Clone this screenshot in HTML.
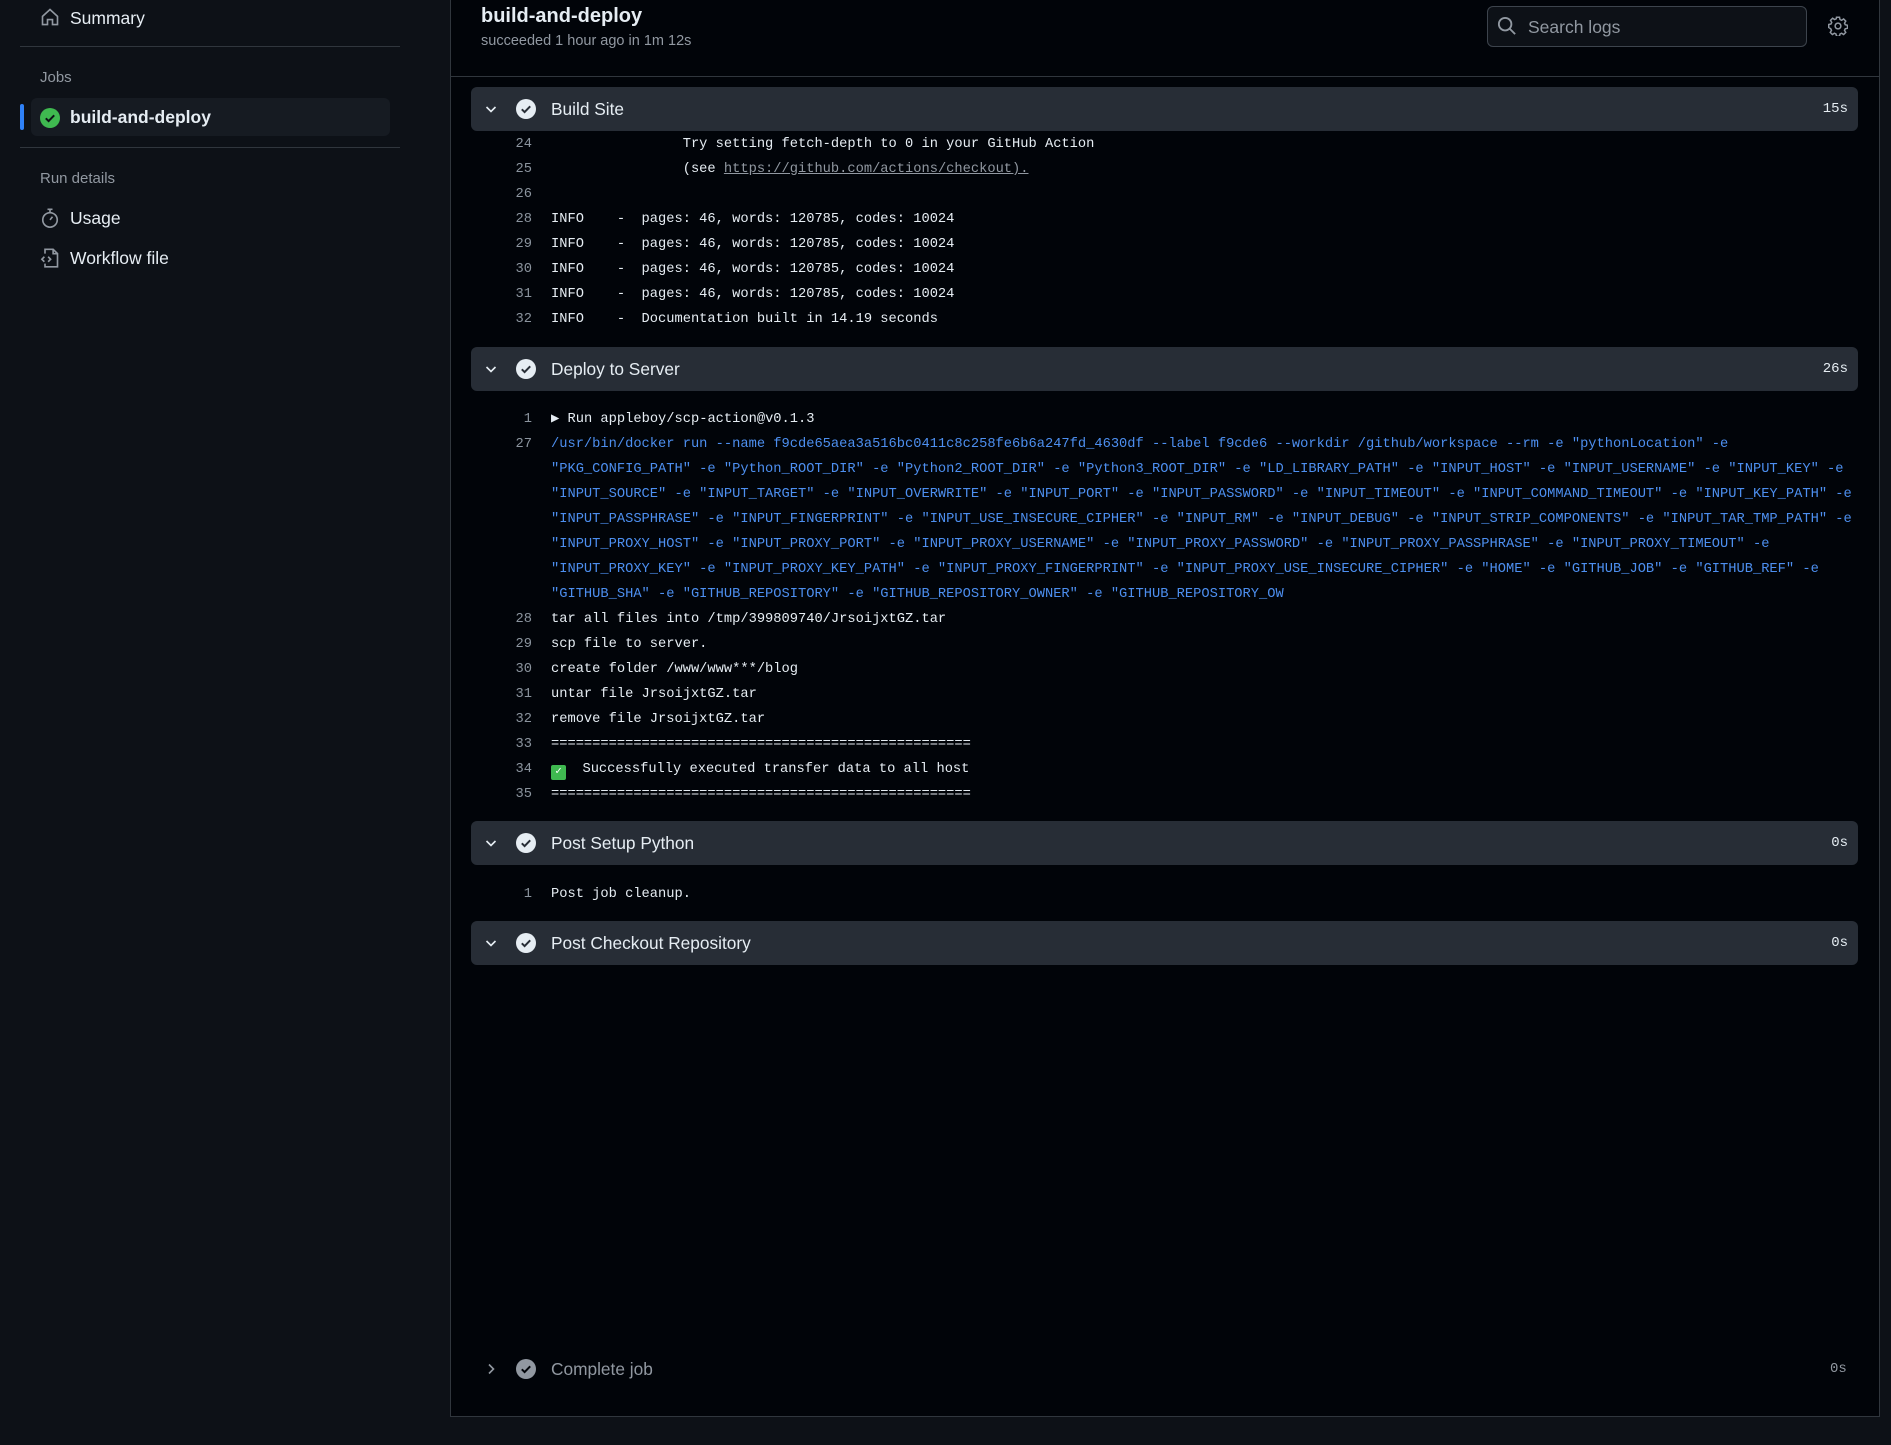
<!DOCTYPE html>
<html><head><meta charset="utf-8"><style>
*{margin:0;padding:0;box-sizing:border-box}
body{width:1891px;height:1445px;background:#0d1117;font-family:"Liberation Sans",sans-serif;color:#e6edf3;position:relative;overflow:hidden}
.a{position:absolute}
.side{font-size:17.5px;color:#e6edf3;white-space:nowrap}
.sep{position:absolute;left:20px;width:380px;height:1px;background:#30363d}
.panel{position:absolute;left:450px;top:-1px;width:1430px;height:1418px;background:#010409;border:1px solid #30363d;border-top:none}
.bar{position:absolute;left:471px;width:1387px;height:44px;background:#272d36;border-radius:6px}
.bar .t{position:absolute;left:80px;top:12px;font-size:17.3px;color:#e6edf3}
.bar .d{position:absolute;right:10px;top:14px;font-family:"Liberation Mono",monospace;font-size:14px;color:#e6edf3}
.bar svg.ch{position:absolute;left:12px;top:14px}
.bar svg.ck{position:absolute;left:45px;top:12px}
.ln{position:absolute;left:471px;height:25px;font-family:"Liberation Mono",monospace;font-size:13.73px;line-height:25px;white-space:pre;color:#e6edf3}
.ln .n{display:inline-block;width:61px;text-align:right;color:#8b949e;margin-right:19px}
.b{color:#4d8ff0}
</style></head><body>
<!-- sidebar -->
<svg class="a" style="left:40px;top:7px" width="20" height="20" viewBox="0 0 16 16" fill="none" stroke="#9198a1" stroke-width="1.3"><path d="M2 7.5L8 2l6 5.5V14H10V10H6v4H2z"/></svg>
<div class="a side" style="left:70px;top:8px">Summary</div>
<div class="sep" style="top:46px"></div>
<div class="a" style="left:40px;top:69px;font-size:15px;color:#9198a1">Jobs</div>
<div class="a" style="left:31px;top:98px;width:359px;height:38px;background:#161b22;border-radius:6px"></div>
<div class="a" style="left:20px;top:104px;width:4px;height:26px;background:#2f81f7;border-radius:2px"></div>
<svg class="a" style="left:40px;top:108px" width="20" height="20" viewBox="0 0 20 20"><circle cx="10" cy="10" r="10" fill="#3fb950"/><path d="M5.8 10.3l2.8 2.8 5.6-5.8" stroke="#0d1117" stroke-width="2" fill="none"/></svg>
<div class="a side" style="left:70px;top:107px;font-weight:bold">build-and-deploy</div>
<div class="sep" style="top:147px"></div>
<div class="a" style="left:40px;top:170px;font-size:15px;color:#9198a1">Run details</div>
<svg class="a" style="left:40px;top:207px" width="20" height="22" viewBox="0 0 16 17" fill="none" stroke="#9198a1" stroke-width="1.3"><circle cx="8" cy="10" r="5.8"/><path d="M6 1.5h4M8 1.5v2.5M8 10l2-2.5"/></svg>
<div class="a side" style="left:70px;top:208px">Usage</div>
<svg class="a" style="left:40px;top:247px" width="20" height="22" viewBox="0 0 16 17" fill="none" stroke="#9198a1" stroke-width="1.3"><path d="M4 5V1.5h6.5L14 5v10.5H4V13M10.5 1.5V5H14M3.5 7.5L1.5 9.5l2 2M6.5 7.5l2 2-2 2"/></svg>
<div class="a side" style="left:70px;top:248px">Workflow file</div>

<!-- panel -->
<div class="panel"></div>
<div class="a" style="left:481px;top:5px;font-size:20px;font-weight:bold">build-and-deploy</div>
<div class="a" style="left:481px;top:33px;font-size:14.5px;color:#9198a1">succeeded 1 hour ago in 1m 12s</div>
<div class="a" style="left:451px;top:76px;width:1428px;height:1px;background:#30363d"></div>
<div class="a" style="left:1487px;top:6px;width:320px;height:41px;border:1px solid #3d444d;border-radius:6px;background:#0d1117"></div>
<svg class="a" style="left:1497px;top:16px" width="20" height="20" viewBox="0 0 16 16" fill="none" stroke="#9198a1" stroke-width="1.5"><circle cx="6.5" cy="6.5" r="5"/><path d="M10.2 10.2L14.5 14.5"/></svg>
<div class="a" style="left:1528px;top:17px;font-size:17.5px;color:#9198a1">Search logs</div>
<svg class="a" style="left:1828px;top:16px" width="20" height="20" viewBox="0 0 16 16" fill="none" stroke="#9198a1" stroke-width="1.2"><path d="M6.8 1h2.4l.4 1.8 1.3.6 1.6-1 1.7 1.7-1 1.6.6 1.3 1.8.4v2.4l-1.8.4-.6 1.3 1 1.6-1.7 1.7-1.6-1-1.3.6-.4 1.8H6.8l-.4-1.8-1.3-.6-1.6 1-1.700-1.7 1-1.6-.6-1.3L.6 9.2V6.8l1.8-.4.6-1.3-1-1.6 1.7-1.7 1.6 1 1.3-.6z"/><circle cx="8" cy="8" r="2.3"/></svg>

<!-- Build Site -->
<div class="bar" style="top:87px"><svg class="ch" width="16" height="16" viewBox="0 0 16 16"><path d="M3.5 6l4.5 4.5L12.5 6" stroke="#e6edf3" stroke-width="1.6" fill="none"/></svg><svg class="ck" width="20" height="20" viewBox="0 0 20 20"><circle cx="10" cy="10" r="10" fill="#e6edf3"/><path d="M5.8 10.3l2.8 2.8 5.6-5.8" stroke="#272d36" stroke-width="2" fill="none"/></svg><span class="t">Build Site</span><span class="d">15s</span></div>
<div class="ln" style="top:132px"><span class="n">24</span>                Try setting fetch-depth to 0 in your GitHub Action</div>
<div class="ln" style="top:157px"><span class="n">25</span>                (see <span style="color:#9198a1;text-decoration:underline">https://github.com/actions/checkout).</span></div>
<div class="ln" style="top:182px"><span class="n">26</span></div>
<div class="ln" style="top:207px"><span class="n">28</span>INFO    -  pages: 46, words: 120785, codes: 10024</div>
<div class="ln" style="top:232px"><span class="n">29</span>INFO    -  pages: 46, words: 120785, codes: 10024</div>
<div class="ln" style="top:257px"><span class="n">30</span>INFO    -  pages: 46, words: 120785, codes: 10024</div>
<div class="ln" style="top:282px"><span class="n">31</span>INFO    -  pages: 46, words: 120785, codes: 10024</div>
<div class="ln" style="top:307px"><span class="n">32</span>INFO    -  Documentation built in 14.19 seconds</div>

<!-- Deploy -->
<div class="bar" style="top:347px"><svg class="ch" width="16" height="16" viewBox="0 0 16 16"><path d="M3.5 6l4.5 4.5L12.5 6" stroke="#e6edf3" stroke-width="1.6" fill="none"/></svg><svg class="ck" width="20" height="20" viewBox="0 0 20 20"><circle cx="10" cy="10" r="10" fill="#e6edf3"/><path d="M5.8 10.3l2.8 2.8 5.6-5.8" stroke="#272d36" stroke-width="2" fill="none"/></svg><span class="t">Deploy to Server</span><span class="d">26s</span></div>
<div class="ln" style="top:407px"><span class="n">1</span>▶ Run appleboy/scp-action@v0.1.3</div>
<div class="ln b" style="top:432px"><span class="n">27</span>/usr/bin/docker run --name f9cde65aea3a516bc0411c8c258fe6b6a247fd_4630df --label f9cde6 --workdir /github/workspace --rm -e "pythonLocation" -e</div>
<div class="ln b" style="top:457px"><span class="n"></span>"PKG_CONFIG_PATH" -e "Python_ROOT_DIR" -e "Python2_ROOT_DIR" -e "Python3_ROOT_DIR" -e "LD_LIBRARY_PATH" -e "INPUT_HOST" -e "INPUT_USERNAME" -e "INPUT_KEY" -e</div>
<div class="ln b" style="top:482px"><span class="n"></span>"INPUT_SOURCE" -e "INPUT_TARGET" -e "INPUT_OVERWRITE" -e "INPUT_PORT" -e "INPUT_PASSWORD" -e "INPUT_TIMEOUT" -e "INPUT_COMMAND_TIMEOUT" -e "INPUT_KEY_PATH" -e</div>
<div class="ln b" style="top:507px"><span class="n"></span>"INPUT_PASSPHRASE" -e "INPUT_FINGERPRINT" -e "INPUT_USE_INSECURE_CIPHER" -e "INPUT_RM" -e "INPUT_DEBUG" -e "INPUT_STRIP_COMPONENTS" -e "INPUT_TAR_TMP_PATH" -e</div>
<div class="ln b" style="top:532px"><span class="n"></span>"INPUT_PROXY_HOST" -e "INPUT_PROXY_PORT" -e "INPUT_PROXY_USERNAME" -e "INPUT_PROXY_PASSWORD" -e "INPUT_PROXY_PASSPHRASE" -e "INPUT_PROXY_TIMEOUT" -e</div>
<div class="ln b" style="top:557px"><span class="n"></span>"INPUT_PROXY_KEY" -e "INPUT_PROXY_KEY_PATH" -e "INPUT_PROXY_FINGERPRINT" -e "INPUT_PROXY_USE_INSECURE_CIPHER" -e "HOME" -e "GITHUB_JOB" -e "GITHUB_REF" -e</div>
<div class="ln b" style="top:582px"><span class="n"></span>"GITHUB_SHA" -e "GITHUB_REPOSITORY" -e "GITHUB_REPOSITORY_OWNER" -e "GITHUB_REPOSITORY_OW</div>
<div class="ln" style="top:607px"><span class="n">28</span>tar all files into /tmp/399809740/JrsoijxtGZ.tar</div>
<div class="ln" style="top:632px"><span class="n">29</span>scp file to server.</div>
<div class="ln" style="top:657px"><span class="n">30</span>create folder /www/www***/blog</div>
<div class="ln" style="top:682px"><span class="n">31</span>untar file JrsoijxtGZ.tar</div>
<div class="ln" style="top:707px"><span class="n">32</span>remove file JrsoijxtGZ.tar</div>
<div class="ln" style="top:732px"><span class="n">33</span>===================================================</div>
<div class="ln" style="top:757px"><span class="n">34</span><span style="display:inline-block;width:15px;height:15px;background:#3fb950;border-radius:2px;vertical-align:-2px;color:#fff;font-size:11px;line-height:15px;text-align:center">✓</span>  Successfully executed transfer data to all host</div>
<div class="ln" style="top:782px"><span class="n">35</span>===================================================</div>

<!-- Post Setup Python -->
<div class="bar" style="top:821px"><svg class="ch" width="16" height="16" viewBox="0 0 16 16"><path d="M3.5 6l4.5 4.5L12.5 6" stroke="#e6edf3" stroke-width="1.6" fill="none"/></svg><svg class="ck" width="20" height="20" viewBox="0 0 20 20"><circle cx="10" cy="10" r="10" fill="#e6edf3"/><path d="M5.8 10.3l2.8 2.8 5.6-5.8" stroke="#272d36" stroke-width="2" fill="none"/></svg><span class="t">Post Setup Python</span><span class="d">0s</span></div>
<div class="ln" style="top:882px"><span class="n">1</span>Post job cleanup.</div>

<!-- Post Checkout -->
<div class="bar" style="top:921px"><svg class="ch" width="16" height="16" viewBox="0 0 16 16"><path d="M3.5 6l4.5 4.5L12.5 6" stroke="#e6edf3" stroke-width="1.6" fill="none"/></svg><svg class="ck" width="20" height="20" viewBox="0 0 20 20"><circle cx="10" cy="10" r="10" fill="#e6edf3"/><path d="M5.8 10.3l2.8 2.8 5.6-5.8" stroke="#272d36" stroke-width="2" fill="none"/></svg><span class="t">Post Checkout Repository</span><span class="d">0s</span></div>

<!-- Complete job -->
<svg class="a" style="left:483px;top:1361px" width="16" height="16" viewBox="0 0 16 16"><path d="M6 3.5l4.5 4.5L6 12.5" stroke="#9198a1" stroke-width="1.6" fill="none"/></svg>
<svg class="a" style="left:516px;top:1359px" width="20" height="20" viewBox="0 0 20 20"><circle cx="10" cy="10" r="10" fill="#9198a1"/><path d="M5.8 10.3l2.8 2.8 5.6-5.8" stroke="#010409" stroke-width="2" fill="none"/></svg>
<div class="a" style="left:551px;top:1359px;font-size:17.3px;color:#9198a1">Complete job</div>
<div class="a" style="left:1830px;top:1361px;font-family:'Liberation Mono',monospace;font-size:14px;color:#9198a1">0s</div>
</body></html>
